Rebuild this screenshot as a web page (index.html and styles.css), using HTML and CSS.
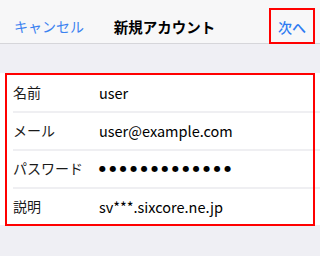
FILE: index.html
```html
<!DOCTYPE html>
<html lang="ja">
<head>
<meta charset="utf-8">
<link rel="stylesheet" href="styles.css">
</head>
<body>
<header class="navbar">
  <span class="nav-cancel">キャンセル</span>
  <span class="nav-title">新規アカウント</span>
  <span class="nav-next">次へ</span>
</header>
<section class="form">
  <div class="row"><span class="label">名前</span><span class="value">user</span></div>
  <div class="row"><span class="label">メール</span><span class="value">user@example.com</span></div>
  <div class="row"><span class="label">パスワード</span><span class="value dots">●●●●●●●●●●●●●</span></div>
  <div class="row"><span class="label">説明</span><span class="value">sv***.sixcore.ne.jp</span></div>
</section>
</body>
</html>
```

FILE: styles.css
```css
* { box-sizing: border-box; }
html, body { margin: 0; padding: 0; }
body {
  width: 320px;
  height: 256px;
  background: #efeff4;
  font-family: "Noto Sans CJK JP", "Noto Sans", sans-serif;
  color: #000;
  overflow: hidden;
}
.navbar {
  height: 44px;
  background: #f7f7f8;
  border-bottom: 1px solid #d6d6da;
  display: grid;
  grid-template-columns: 1fr auto 1fr;
  align-items: center;
  padding: 8px 5px 0 14px;
  font-size: 14px;
}
.nav-cancel { color: #3b82f0; justify-self: start; }
.nav-title { font-weight: 700; font-size: 14.5px; }
.nav-next {
  justify-self: end;
  align-self: end;
  width: 46px;
  height: 36px;
  border: 2px solid #ff0000;
  display: flex;
  align-items: center;
  justify-content: center;
  padding-top: 1px;
  color: #2f7cf2;
  font-weight: 500;
}
.form {
  position: relative;
  margin-top: 29px;
  background: #ffffff;
}
.form::after {
  content: "";
  position: absolute;
  left: 5px;
  right: 5px;
  top: 0;
  bottom: -1px;
  border: 2px solid #ff0000;
}
.row {
  height: 38px;
  display: grid;
  grid-template-columns: 86px 1fr;
  align-items: center;
  padding-left: 13px;
  font-size: 14px;
  position: relative;
}
.row + .row::before {
  content: "";
  position: absolute;
  left: 13px;
  right: 0;
  top: 0;
  height: 2px;
  background: #efeff2;
}
.label { color: #1a1a1a; }
.value { color: #000; font-size: 14.5px; }
.dots {
  font-family: "DejaVu Sans", sans-serif;
  font-size: 8px;
  letter-spacing: 3.45px;
}
```
